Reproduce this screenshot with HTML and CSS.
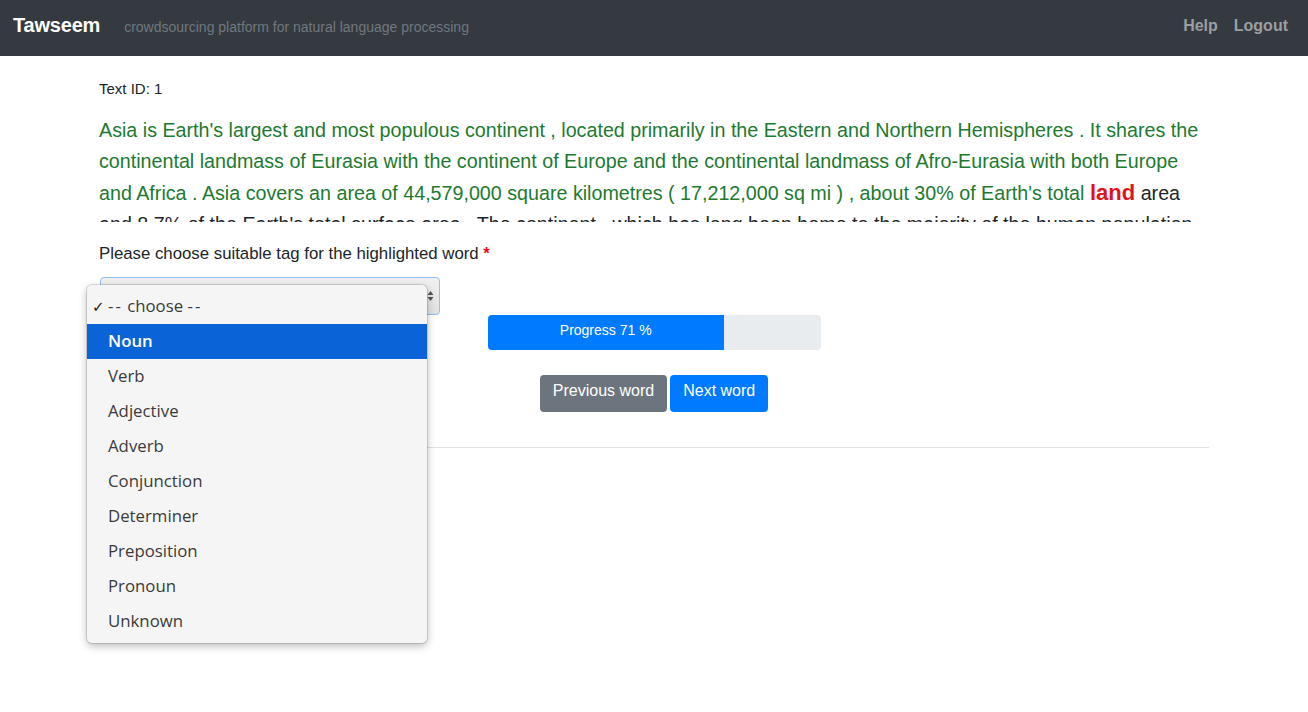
FILE: index.html
```html
<!DOCTYPE html>
<html lang="en">
<head>
<meta charset="utf-8">
<title>Tawseem</title>
<link rel="stylesheet" href="styles.css">
</head>
<body>
<nav class="navbar">
  <div class="nav-left">
    <span class="brand">Tawseem</span>
    <span class="tagline">crowdsourcing platform for natural language processing</span>
  </div>
  <div class="nav-right">
    <a class="nav-link">Help</a>
    <a class="nav-link">Logout</a>
  </div>
</nav>
<main class="container">
  <div class="text-id">Text ID: 1</div>
  <div class="text-box">
    <span class="done">Asia is Earth's largest and most populous continent , located primarily in the Eastern and Northern Hemispheres . It shares the continental landmass of Eurasia with the continent of Europe and the continental landmass of Afro-Eurasia with both Europe and Africa . Asia covers an area of 44,579,000 square kilometres ( 17,212,000 sq mi ) , about 30% of Earth's total</span>
    <span class="current">land</span>
    <span class="rest">area and 8.7% of the Earth's total surface area . The continent , which has long been home to the majority of the human population [4] , was the site of many of the first civilizations .</span>
  </div>
  <div class="label">Please choose suitable tag for the highlighted word <span class="req">*</span></div>
  <div class="select-wrap">
    <div class="select">
      <span class="arrows"><svg width="7" height="12" viewBox="0 0 7 12"><path d="M3.5 1 L6.5 5 L0.5 5 Z M3.5 11 L6.5 7 L0.5 7 Z" fill="#555"/></svg></span>
    </div>
    <ul class="menu">
      <li class="opt checked"><span class="check">✓</span><span class="dash">--</span> choose <span class="dash">--</span></li>
      <li class="opt active">Noun</li>
      <li class="opt">Verb</li>
      <li class="opt">Adjective</li>
      <li class="opt">Adverb</li>
      <li class="opt">Conjunction</li>
      <li class="opt">Determiner</li>
      <li class="opt">Preposition</li>
      <li class="opt">Pronoun</li>
      <li class="opt">Unknown</li>
    </ul>
  </div>
  <div class="center-col">
    <div class="progress">
      <div class="progress-bar" style="width: 71%">Progress 71 %</div>
    </div>
    <div class="buttons">
      <button class="btn btn-gray">Previous word</button>
      <button class="btn btn-blue">Next word</button>
    </div>
  </div>
  <hr class="rule">
</main>
</body>
</html>
```

FILE: styles.css
```css
* { box-sizing: border-box; }
html, body { margin: 0; padding: 0; }
html, body { min-height: 712px; }
body {
  font-family: "Liberation Sans", Arial, sans-serif;
  color: #212529;
  background: #fff;
}
.navbar {
  height: 56px;
  background: #343a40;
  display: flex;
  align-items: center;
  justify-content: space-between;
  padding: 0 20px 5px 13px;
}
.nav-left { display: flex; align-items: baseline; }
.brand {
  color: #fff;
  font-weight: bold;
  font-size: 20px;
  letter-spacing: -0.2px;
}
.tagline {
  color: #71777e;
  font-size: 14px;
  margin-left: 24px;
}
.nav-right { display: flex; gap: 16px; align-self: center; }
.nav-link {
  color: #9b9ea2;
  font-weight: bold;
  font-size: 16px;
}
.container {
  width: 1110px;
  margin: 0 auto;
  padding-top: 22px;
}
.text-id {
  font-size: 15px;
  line-height: 21px;
}
.text-box {
  margin-top: 16px;
  height: 107px;
  overflow: hidden;
  font-size: 19.7px;
  line-height: 31px;
}
.done { color: #1d7a2f; }
.current { color: #e3121c; font-weight: bold; font-size: 22px; }
.rest { color: #212529; }
.label {
  margin-top: 21px;
  font-size: 16.8px;
  line-height: 22px;
}
.req { color: #e3121c; font-weight: bold; }
.select-wrap {
  position: relative;
  margin-top: 12px;
  margin-left: 1px;
  width: 340px;
  height: 38px;
}
.select {
  width: 340px;
  height: 38px;
  border: 1px solid #8fc0ef;
  border-radius: 4px;
  background: linear-gradient(#f1f1f1, #e0e0e0);
  display: flex;
  align-items: center;
  justify-content: flex-end;
  padding-right: 5px;
}
.arrows { display: flex; }
.menu {
  position: absolute;
  left: -13px;
  top: 8px;
  width: 340px;
  margin: 0;
  padding: 4px 0;
  list-style: none;
  background: #f5f5f5;
  border-radius: 5px;
  box-shadow: 0 0 0 1px rgba(0,0,0,0.12), 0 3px 8px rgba(0,0,0,0.28);
  font-family: "Open Sans", "DejaVu Sans", sans-serif;
  font-size: 16.8px;
  color: #3b3b3b;
  z-index: 5;
}
.opt {
  height: 35px;
  line-height: 34px;
  padding-left: 21px;
  position: relative;
}
.dash { letter-spacing: 2px; }
.check {
  position: absolute;
  left: 5px;
  color: #222;
  font-size: 15px;
  font-weight: bold;
}
.opt.active {
  background: #0b63d8;
  color: #fff;
  font-weight: 600;
}
.center-col {
  display: flex;
  flex-direction: column;
  align-items: center;
}
.progress {
  width: 333px;
  height: 35px;
  background: #e9ecef;
  border-radius: 4px;
  overflow: hidden;
  display: flex;
}
.progress-bar {
  background: #007bff;
  color: #fff;
  font-size: 14px;
  display: flex;
  align-items: center;
  justify-content: center;
  padding-bottom: 5px;
}
.buttons {
  margin-top: 25px;
  display: flex;
  gap: 3px;
}
.btn {
  border: none;
  border-radius: 4px;
  color: #fff;
  font-family: "Liberation Sans", Arial, sans-serif;
  font-size: 16px;
  height: 37px;
  padding: 0 13px 5px;
}
.btn-gray { background: #6c757d; }
.btn-blue { background: #007bff; }
.rule {
  margin: 35px 0 0;
  border: none;
  border-top: 1px solid #e2e2e2;
}
```
